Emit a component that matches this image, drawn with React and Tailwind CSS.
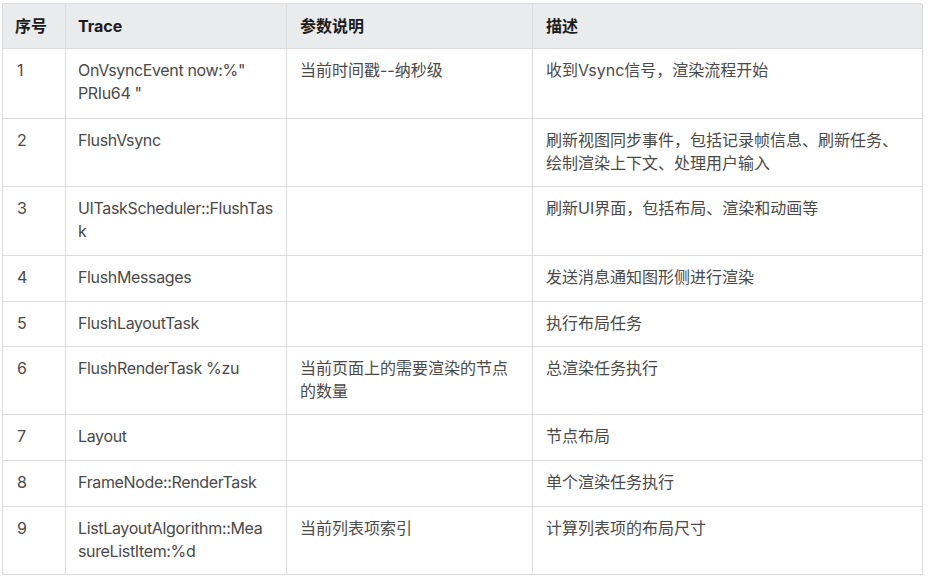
import React from "react";

const rows = [
  { h: "h-[70px]", n: "1", t: ["OnVsyncEvent now:%\"", "PRIu64 \""], p: ["当前时间戳--纳秒级"], d: ["收到Vsync信号，渲染流程开始"] },
  { h: "h-[68px]", n: "2", t: ["FlushVsync"], p: [], d: ["刷新视图同步事件，包括记录帧信息、刷新任务、", "绘制渲染上下文、处理用户输入"] },
  { h: "h-[69px]", n: "3", t: ["UITaskScheduler::FlushTas", "k"], p: [], d: ["刷新UI界面，包括布局、渲染和动画等"] },
  { h: "h-[46px]", n: "4", t: ["FlushMessages"], p: [], d: ["发送消息通知图形侧进行渲染"] },
  { h: "h-[45px]", n: "5", t: ["FlushLayoutTask"], p: [], d: ["执行布局任务"] },
  { h: "h-[68px]", n: "6", t: ["FlushRenderTask %zu"], p: ["当前页面上的需要渲染的节点", "的数量"], d: ["总渲染任务执行"] },
  { h: "h-[46px]", n: "7", t: ["Layout"], p: [], d: ["节点布局"] },
  { h: "h-[46px]", n: "8", t: ["FrameNode::RenderTask"], p: [], d: ["单个渲染任务执行"] },
  { h: "h-[68px]", n: "9", t: ["ListLayoutAlgorithm::Mea", "sureListItem:%d"], p: ["当前列表项索引"], d: ["计算列表项的布局尺寸"] },
];

function Lines({ items }) {
  return items.map((l, i) => (
    <div key={i} className="whitespace-nowrap">
      {l}
    </div>
  ));
}

const cell = "border-r border-b border-[#dcdcdc] pt-[10px] leading-[23px]";

export default function App() {
  return (
    <div
      className="w-[928px] h-[579px] bg-white overflow-hidden"
      style={{ fontFamily: 'Inter, "Noto Sans CJK SC", sans-serif' }}
    >
      <div className="ml-[2px] mt-[3px] w-[920px] border-l border-t border-[#dcdcdc] text-[16px] text-[#4a4a4a]">
        <div className="flex h-[45px] bg-[#eaebed] font-bold text-[#1c1c1c]">
          <div className="w-[63px] shrink-0 border-r border-b border-[#dcdcdc] pl-[12px] flex items-center">序号</div>
          <div className="w-[221px] shrink-0 border-r border-b border-[#dcdcdc] pl-[12px] flex items-center">Trace</div>
          <div className="w-[246px] shrink-0 border-r border-b border-[#dcdcdc] pl-[13px] flex items-center">参数说明</div>
          <div className="w-[390px] shrink-0 border-r border-b border-[#dcdcdc] pl-[13px] flex items-center">描述</div>
        </div>
        {rows.map((r) => (
          <div key={r.n} className={`flex ${r.h}`}>
            <div className={`w-[63px] shrink-0 pl-[14px] ${cell}`}>{r.n}</div>
            <div className={`w-[221px] shrink-0 pl-[12px] tracking-[-0.35px] ${cell}`}>
              <Lines items={r.t} />
            </div>
            <div className={`w-[246px] shrink-0 pl-[13px] ${cell}`}>
              <Lines items={r.p} />
            </div>
            <div className={`w-[390px] shrink-0 pl-[13px] ${cell}`}>
              <Lines items={r.d} />
            </div>
          </div>
        ))}
      </div>
    </div>
  );
}
